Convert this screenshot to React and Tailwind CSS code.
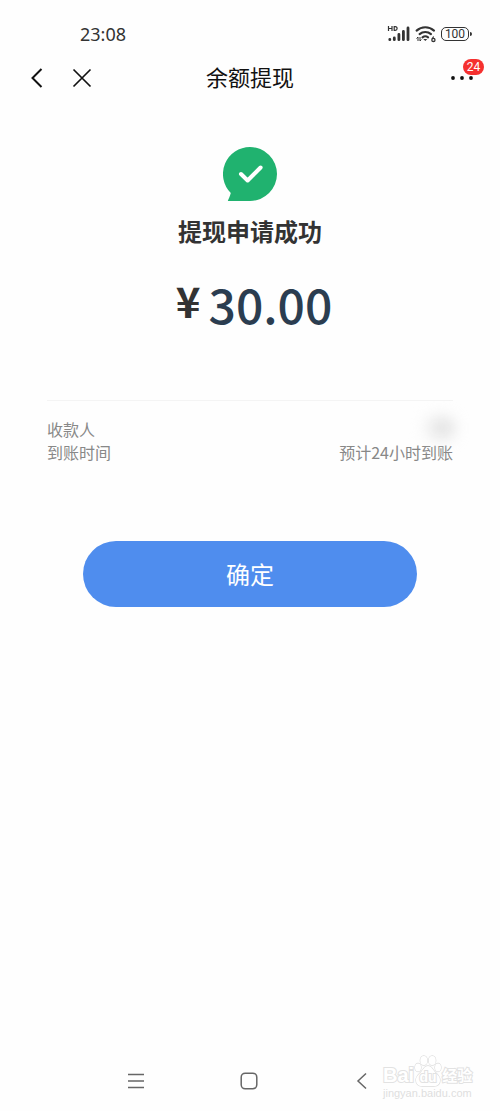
import React from "react";

/* ---------------- DATA ---------------- */
const DETAILS = [
  { label: "收款人", value: "", hidden: true },
  { label: "到账时间", value: "预计24小时到账", hidden: false },
];

/* ---------------- STATUS BAR ---------------- */
function SignalIcon() {
  return (
    <svg width="24" height="18" viewBox="0 0 24 18" aria-hidden="true">
      <g fill="none" stroke="#333" strokeWidth="1.2">
        <path d="M1.5 1v5M5 1v5M1.5 3.5H5" />
        <path d="M7.2 1.6v3.8h1a1.9 1.9 0 0 0 0-3.8z" />
      </g>
      <g stroke="#333" strokeWidth="2.8" strokeLinecap="round">
        <path d="M2.8 14.5v.2M7.3 13v1.7M11.9 9.5v5.2M16.4 6.5v8.2M21 3v11.7" />
      </g>
    </svg>
  );
}

function WifiIcon() {
  return (
    <svg width="22" height="18" viewBox="0 0 22 18" aria-hidden="true">
      <g fill="none" stroke="#333" strokeWidth="2.1" strokeLinecap="round">
        <path d="M1.6 5.6a13 13 0 0 1 17.4 0" />
        <path d="M4.6 9.1a8.6 8.6 0 0 1 11.4 0" />
        <path d="M7.5 12.3a4.6 4.6 0 0 1 5.6 0" />
      </g>
      <path d="M8.3 14h4l-2 2.100z" fill="#333" />
      <path d="M3 16v-4L1.5 13.5M5 12v4l1.3-1.5" fill="none" stroke="#333" />
      <path d="M18.6 11.5l-1.500 2.500" stroke="#333" strokeWidth="1.2" />
      <circle cx="18.400" cy="14.900" r="1.600" fill="none" stroke="#333" strokeWidth="1.3" />
    </svg>
  );
}

function StatusBar() {
  return (
    <div className="flex h-7 items-center justify-between pl-20 pr-7 text-[#333]">
      <span className="font-['Noto_Sans',sans-serif] text-lg">23:08</span>
      <div className="flex items-center gap-1">
        <SignalIcon />
        <WifiIcon />
        <div className="flex items-center gap-px">
          <span className="flex h-[14px] w-7 items-center justify-center rounded-[5px] border border-[#333] font-['Roboto',sans-serif] text-xs leading-none">
            100
          </span>
          <span className="h-1 w-0.5 rounded-r bg-[#333]" />
        </div>
      </div>
    </div>
  );
}

/* ---------------- HEADER ---------------- */
function Header() {
  return (
    <header className="grid h-12 grid-cols-[1fr_auto_1fr] items-center px-6 text-[#111]">
      <div className="flex items-center gap-5">
        <button type="button" aria-label="返回" className="flex w-6 justify-center">
          <svg width="14" height="22" viewBox="0 0 14 22" fill="none" stroke="currentColor" strokeWidth="2">
            <path d="M12.5 2L3.500 11l9 9" />
          </svg>
        </button>
        <button type="button" aria-label="关闭" className="flex w-7 justify-center">
          <svg width="20" height="20" viewBox="0 0 20 20" fill="none" stroke="currentColor" strokeWidth="1.7">
            <path d="M1.5 1.500l17 17M18.500 1.500l-17 17" />
          </svg>
        </button>
      </div>
      <h1 className="pb-1 text-[22px] leading-8">余额提现</h1>
      <button type="button" aria-label="更多" className="relative flex w-7 justify-center justify-self-end">
        <svg width="24" height="6" viewBox="0 0 24 6" fill="currentColor">
          <circle cx="3" cy="3" r="1.900" />
          <circle cx="12" cy="3" r="1.900" />
          <circle cx="21" cy="3" r="1.900" />
        </svg>
        <span className="absolute -top-4 -right-2 flex h-4 w-[21px] items-center justify-center rounded-full bg-[#f5302f] font-['Roboto',sans-serif] text-xs leading-none text-white">
          24
        </span>
      </button>
    </header>
  );
}

/* ---------------- RESULT ---------------- */
function SuccessIcon() {
  return (
    <svg width="54" height="54" viewBox="0 0 54 54" aria-hidden="true">
      <path
        d="M27 0a27 27 0 0 1 0 54H4.800c1.100-2.600 2.100-5 3-8A27 27 0 0 1 27 0z"
        fill="#20b26f"
      />
      <path
        d="M18 27l6.600 6.500L37.600 20.500"
        fill="none"
        stroke="#fff"
        strokeWidth="4"
        strokeLinecap="round"
        strokeLinejoin="round"
      />
    </svg>
  );
}

function Result() {
  return (
    <section className="flex flex-col items-center">
      <SuccessIcon />
      <h2 className="mt-3 text-2xl leading-9 font-bold text-[#333]">提现申请成功</h2>
      <p className="mt-7 flex items-start gap-2 pl-2">
        <span className="text-[42px] leading-[46px] font-bold text-[#333]">¥</span>
        <span className="text-5xl leading-[52px] font-medium text-[#2b3d50]">30.00</span>
      </p>
    </section>
  );
}

function Details() {
  return (
    <dl className="mx-[47px] border-t border-[#f4f4f4] pt-[17px] text-base leading-[23px] text-[#888]">
      {DETAILS.map((row) => (
        <div key={row.label} className="flex justify-between">
          <dt>{row.label}</dt>
          <dd>
            {row.hidden ? (
              <span className="block h-5 w-7 rounded-full bg-linear-to-r from-[#f4f4f4] to-[#d0d0d0] blur-sm" />
            ) : (
              row.value
            )}
          </dd>
        </div>
      ))}
    </dl>
  );
}

/* ---------------- SYSTEM NAV ---------------- */
function SystemNav() {
  return (
    <nav className="mt-auto flex h-[60px] items-center justify-center gap-[89px] pr-0.5 text-[#666]">
      <button type="button" aria-label="最近任务" className="flex w-6 justify-center">
        <svg width="18" height="18" viewBox="0 0 18 18" fill="none" stroke="currentColor" strokeWidth="1.500">
          <path d="M1 2.500h16M1 9h16M1 15.500h16" />
        </svg>
      </button>
      <button type="button" aria-label="主页" className="flex w-6 justify-center">
        <svg width="18" height="18" viewBox="0 0 18 18" fill="none" stroke="currentColor" strokeWidth="1.500">
          <rect x="1.200" y="1.200" width="15.600" height="15.600" rx="4" />
        </svg>
      </button>
      <button type="button" aria-label="后退" className="flex w-6 justify-center">
        <svg width="18" height="18" viewBox="0 0 18 18" fill="none" stroke="currentColor" strokeWidth="1.500">
          <path d="M13 1.500L5 9l8 7.500" />
        </svg>
      </button>
    </nav>
  );
}

function Watermark() {
  return (
    <div className="pointer-events-none absolute right-6 bottom-3 w-[93px] font-bold text-white">
      <div className="flex h-8 items-end text-xl leading-6 [-webkit-text-stroke:2px_#e2e2e2] [paint-order:stroke_fill]">
        <span className="font-['Liberation_Sans',sans-serif]">Bai</span>
        <span className="relative flex h-8 w-7 items-end justify-center">
          <svg
            className="absolute inset-0"
            width="28"
            height="32"
            viewBox="0 0 28 32"
            fill="#fff"
            stroke="#dcdcdc"
            strokeWidth="1.3"
          >
            <ellipse cx="9.8" cy="5.500" rx="3.500" ry="4.600" />
            <ellipse cx="18.200" cy="5.500" rx="3.500" ry="4.600" />
            <ellipse cx="4" cy="12.500" rx="3" ry="4" />
            <ellipse cx="24" cy="12.500" rx="3" ry="4" />
            <path d="M14 11c3 0 4.500 3 6.500 5.500s5.500 4.500 5.500 8.500-2.500 6-6 6H8c-3.500 0-6-2-6-6s3.500-6 5.500-8.500S11 11 14 11z" />
          </svg>
          <span className="relative font-['Liberation_Sans',sans-serif] text-sm leading-5">du</span>
        </span>
        <span className="text-[15px] leading-6">经验</span>
      </div>
      <div className="font-['Liberation_Sans',sans-serif] text-[11px] leading-3 font-normal text-[#dedede]">
        jingyan.baidu.com
      </div>
    </div>
  );
}

/* ---------------- PAGE ---------------- */
export default function App() {
  return (
    <div className="relative flex min-h-screen flex-col bg-[#fefefe] pt-5 font-['Noto_Sans_CJK_SC',sans-serif]">
      <StatusBar />
      <main className="flex flex-col gap-[71px] pt-1.5 pb-10">
        <div className="flex flex-col gap-[45px]">
          <Header />
          <Result />
        </div>
        <Details />
        <button
          type="button"
          className="mt-1.5 h-[66px] w-2/3 self-center rounded-full bg-[#4f8dee] text-2xl text-white"
        >
          确定
        </button>
      </main>
      <SystemNav />
      <Watermark />
    </div>
  );
}
